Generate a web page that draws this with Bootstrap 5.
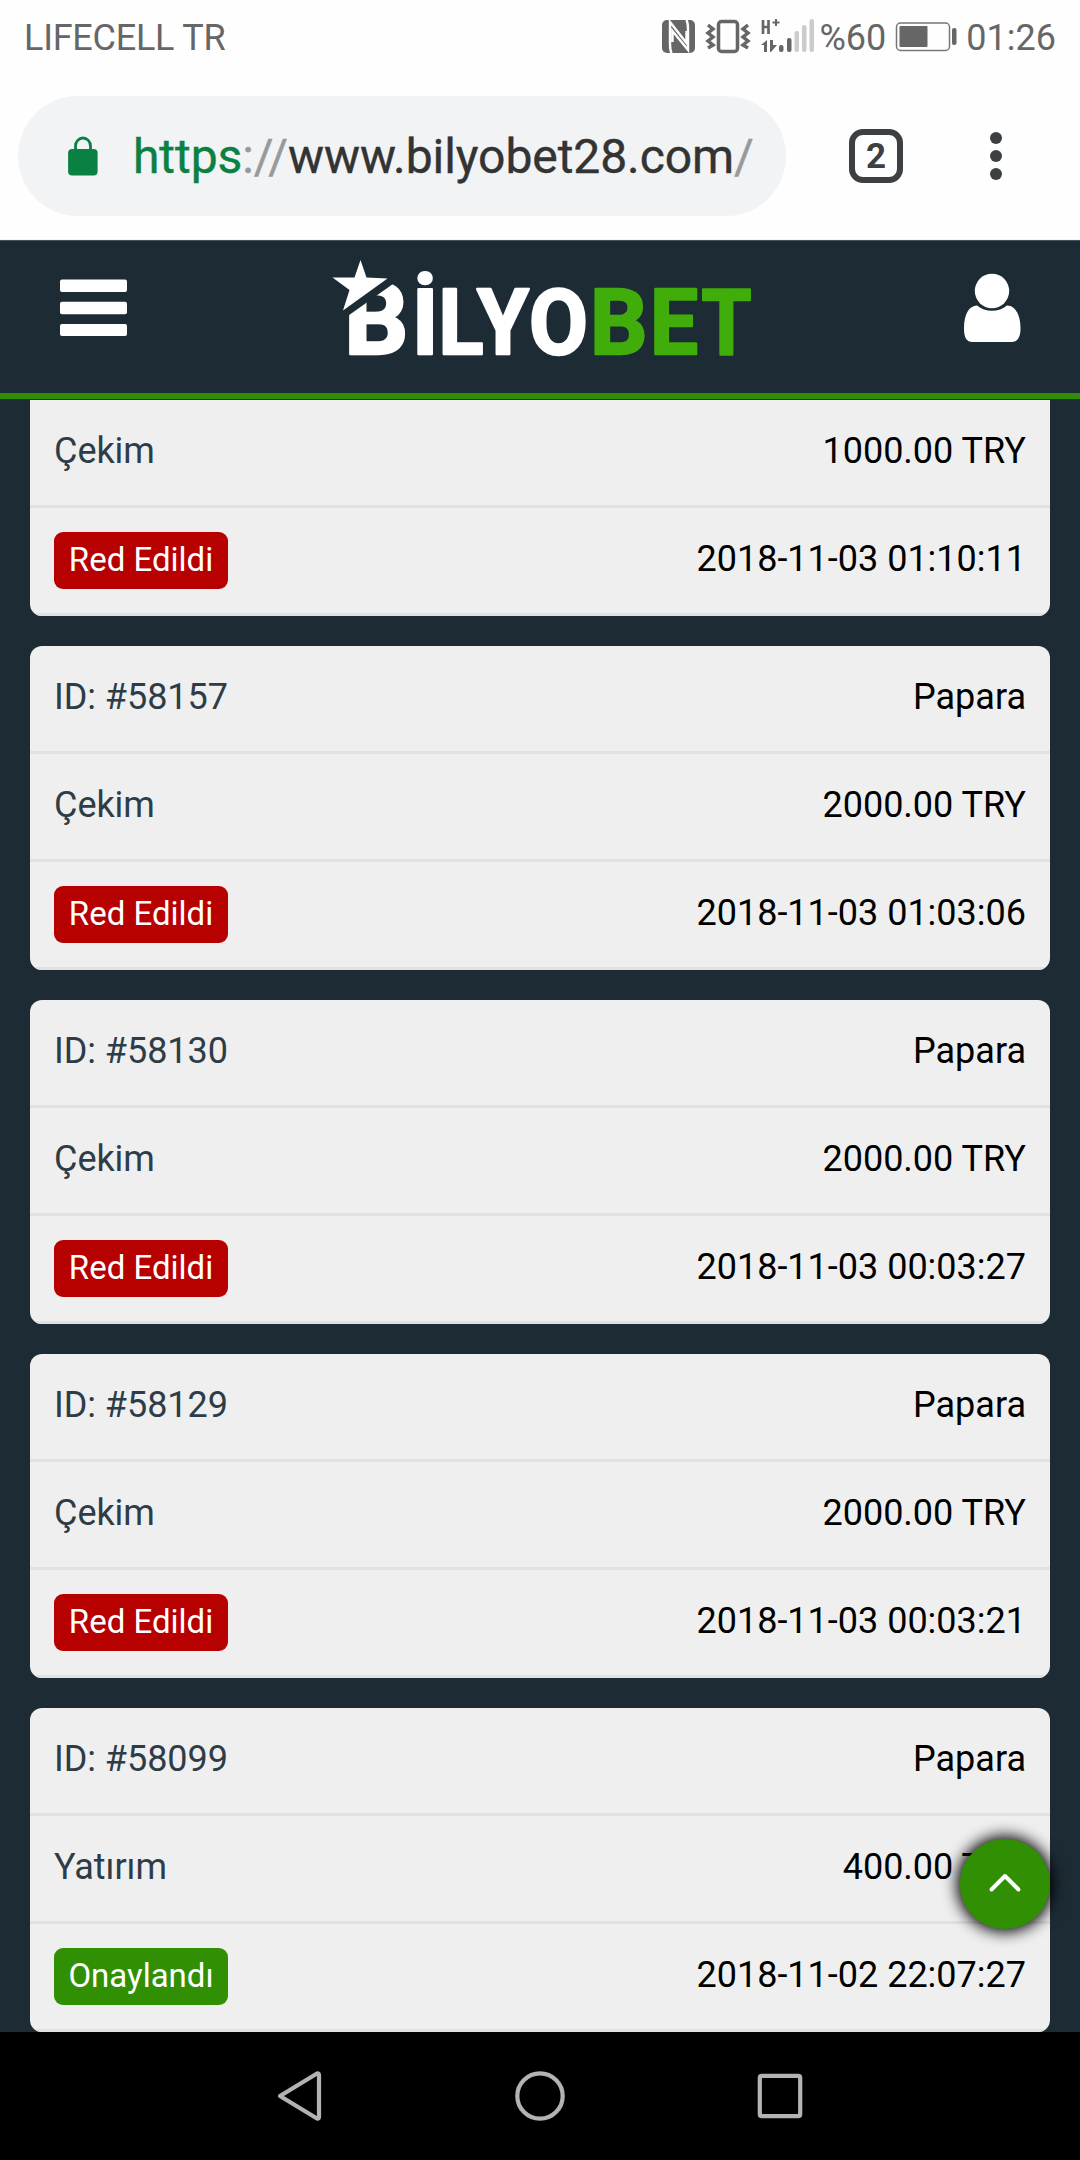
<!DOCTYPE html>
<html lang="tr">
<head>
<meta charset="utf-8">
<meta name="viewport" content="width=device-width, initial-scale=1">
<title>Bilyobet</title>
<link href="https://cdn.jsdelivr.net/npm/bootstrap@5.3.0/dist/css/bootstrap.min.css" rel="stylesheet">
<style>
body{font-family:Roboto,"Noto Sans",sans-serif;width:1080px;height:2160px;overflow:hidden;background:#1d2c34}
svg{display:block;flex:none}
.statusbar{height:72px;padding:0 24px;font-size:36px;line-height:72px;color:#666;background:#fefefe}
.statusbar span{padding-top:3px;line-height:72px}
.carrier{letter-spacing:-.25px}
.toolbar{height:168px;background:#fefefe;padding:24px 0 24px 18px;border-bottom:1px solid #f4f4f4}
.urlpill{width:768px;height:120px;border-radius:60px;background:#f1f3f5;padding-left:48px}
.urltext{font-size:48px;margin-left:35px;color:#333;white-space:nowrap;line-height:120px;padding-top:3px;letter-spacing:-.07px;-webkit-text-stroke:.4px}
.urltext .scheme{color:#0b8043}
.urltext .dim{color:#999}
.tabcount{width:54px;height:54px;border:6px solid #3c4043;border-radius:14px;margin-left:63px;font-weight:700;font-size:35px;color:#3c4043;line-height:1;padding-top:2px}
.sitehead{height:159px;border-top:1px solid #465157;border-bottom:6px solid #318f06;background:#1d2c34}
.feed{height:1633px;padding:0 30px;overflow:hidden;border-top:1px solid #15400a}
.txn{border-radius:12px;overflow:hidden;background:#efefef;margin-bottom:30px}
.txn.cut{border-radius:0 0 12px 12px}
.txn-row{height:108px;border-bottom:3px solid #e1e1e1;padding:0 24px;font-size:36px;color:#000}
.txn-row .lbl{color:#2e3c47;letter-spacing:-.05px}
.txn-row span{line-height:101px;padding-bottom:2px;white-space:nowrap}
.txn-row .state{height:57px;width:174px;line-height:56px;padding:0;border-radius:9px;font-size:33px;color:#fff;text-align:center}
.rejected{background:#b70000}
.approved{background:#318f03}
.totop{position:fixed;left:960px;top:1839px;width:90px;height:90px;background:#318f03;box-shadow:0 0 15px 3px #000}
.sysnav{height:128px;background:#000;padding-left:276px}
</style>
<script src="https://cdn.jsdelivr.net/npm/bootstrap@5.3.0/dist/js/bootstrap.bundle.min.js"></script>
</head>
<body class="m-0">
<div class="statusbar d-flex align-items-center">
  <span class="carrier me-auto">LIFECELL TR</span>
  <svg width="157" height="72" viewBox="659 0 157 72" fill="#666">
    <rect x="662" y="20" width="33" height="33" rx="5"/>
    <path d="M671.500 53Q670 50 670 44V22L686.500 43V31M686.500 20Q688 23 688 29V50L672.500 31V42" fill="none" stroke="#fefefe" stroke-width="2.400"/>
    <rect x="718.500" y="21.500" width="19" height="30" rx="3" fill="none" stroke="#666" stroke-width="3.500"/>
    <path d="M708 25l5 4-5 4 5 4-5 4 5 4-5 3M748 25l-5 4 5 4-5 4 5 4-5 4 5 3" fill="none" stroke="#666" stroke-width="3.500"/>
    <path d="M763 20v14M768.500 20v14M763 27h5.500" stroke="#666" stroke-width="2.700"/>
    <path d="M776 19v7M772.500 22.500h7" stroke="#666" stroke-width="2"/>
    <path d="M761 45l6-5v12h-3v-7zM770 40h3v5h4l-6 7h-1z"/>
    <rect x="779" y="45" width="4.500" height="7" rx="2"/><rect x="787" y="38" width="4.500" height="14" rx="2"/>
    <g fill="#ccc"><rect x="794.500" y="31" width="4.500" height="21" rx="2"/><rect x="802" y="25" width="4.500" height="27" rx="2"/><rect x="809.500" y="19" width="4.500" height="33" rx="2"/></g>
  </svg>
  <span class="ms-1">%60</span>
  <svg class="ms-2" width="64" height="72" viewBox="894 0 64 72" fill="#666">
    <rect x="896.500" y="23" width="53" height="27.500" rx="4" fill="none" stroke="#777" stroke-width="1.500"/>
    <rect x="899.500" y="26" width="28" height="21" rx="1"/><rect x="952" y="28" width="4.500" height="17" rx="2"/>
  </svg>
  <span class="ms-2">01:26</span>
</div>
<div class="toolbar d-flex align-items-center">
  <div class="urlpill d-flex align-items-center">
    <svg class="ms-0" width="32" height="40" viewBox="-2 0 32 40"><rect x="-1.400" y="13" width="29.500" height="26.500" rx="4" fill="#0b8043" transform="translate(1.500 0)"/><path d="M7.500 15V10a7.500 8 0 0 1 15 0v5" fill="none" stroke="#0b8043" stroke-width="2.800"/></svg>
    <div class="urltext"><span class="scheme">https</span><span class="dim">://</span>www.bilyobet28.com<span class="dim">/</span></div>
  </div>
  <div class="tabcount d-flex align-items-center justify-content-center">2</div>
  <svg width="12" height="50" viewBox="0 0 12 50" fill="#3c4043" style="margin-left:87px"><circle cx="6" cy="7" r="6"/><circle cx="6" cy="25" r="6"/><circle cx="6" cy="43" r="6"/></svg>
</div>
<header class="sitehead">
  <svg width="1080" height="152" viewBox="0 241 1080 152" fill="#fff">
    <rect x="60" y="279.500" width="67" height="12.500" rx="2"/><rect x="60" y="301.700" width="67" height="12.500" rx="2"/><rect x="60" y="324" width="67" height="12" rx="2"/>
    <g font-family="Roboto" font-weight="700" font-size="90" stroke="#fff" stroke-width="2.500" stroke-linejoin="round">
      <text y="353.500"><tspan x="344" font-size="101">B</tspan><tspan x="412">İ</tspan><tspan x="438.500" textLength="45" lengthAdjust="spacingAndGlyphs">L</tspan><tspan x="477" textLength="52" lengthAdjust="spacingAndGlyphs">Y</tspan><tspan x="529" textLength="59" lengthAdjust="spacingAndGlyphs">O</tspan></text>
      <text y="353.500" fill="#40ad0a" stroke="#40ad0a"><tspan x="590">B</tspan><tspan x="650" textLength="48" lengthAdjust="spacingAndGlyphs">E</tspan><tspan x="701.500" textLength="50" lengthAdjust="spacingAndGlyphs">T</tspan></text>
    </g>
    <path d="M340 321.500L400 279V270H340z" fill="#1d2c34"/>
    <path d="M360.500 260l6 17.500 21 1-44.500 32 6.500-20.500-17-12.500 22 0z"/>
    <circle cx="992" cy="291" r="17.200"/>
    <path d="M977 305.500c8 7 22 7 30 0 8 0 13.500 9 13.500 23 0 9-3 13.500-9 13.500h-39c-6 0-8.500-4.500-8.500-13.500 0-14 5-23 13-23z"/>
  </svg>
</header>
<main class="feed">
  <section class="txn cut">
    <div class="txn-row d-flex align-items-center justify-content-between"><span class="lbl">Çekim</span><span>1000.00 TRY</span></div>
    <div class="txn-row d-flex align-items-center justify-content-between"><span class="state rejected">Red Edildi</span><span>2018-11-03 01:10:11</span></div>
  </section>
  <section class="txn">
    <div class="txn-row d-flex align-items-center justify-content-between"><span class="lbl">ID: #58157</span><span>Papara</span></div>
    <div class="txn-row d-flex align-items-center justify-content-between"><span class="lbl">Çekim</span><span>2000.00 TRY</span></div>
    <div class="txn-row d-flex align-items-center justify-content-between"><span class="state rejected">Red Edildi</span><span>2018-11-03 01:03:06</span></div>
  </section>
  <section class="txn">
    <div class="txn-row d-flex align-items-center justify-content-between"><span class="lbl">ID: #58130</span><span>Papara</span></div>
    <div class="txn-row d-flex align-items-center justify-content-between"><span class="lbl">Çekim</span><span>2000.00 TRY</span></div>
    <div class="txn-row d-flex align-items-center justify-content-between"><span class="state rejected">Red Edildi</span><span>2018-11-03 00:03:27</span></div>
  </section>
  <section class="txn">
    <div class="txn-row d-flex align-items-center justify-content-between"><span class="lbl">ID: #58129</span><span>Papara</span></div>
    <div class="txn-row d-flex align-items-center justify-content-between"><span class="lbl">Çekim</span><span>2000.00 TRY</span></div>
    <div class="txn-row d-flex align-items-center justify-content-between"><span class="state rejected">Red Edildi</span><span>2018-11-03 00:03:21</span></div>
  </section>
  <section class="txn">
    <div class="txn-row d-flex align-items-center justify-content-between"><span class="lbl">ID: #58099</span><span>Papara</span></div>
    <div class="txn-row d-flex align-items-center justify-content-between"><span class="lbl">Yatırım</span><span>400.00 TRY</span></div>
    <div class="txn-row d-flex align-items-center justify-content-between"><span class="state approved">Onaylandı</span><span>2018-11-02 22:07:27</span></div>
  </section>
</main>
<a class="totop rounded-circle d-flex align-items-center justify-content-center" aria-label="Yukarı">
  <svg width="34" height="24" viewBox="0 0 34 24" fill="none" stroke="#fff" stroke-width="4" stroke-linecap="round" stroke-linejoin="round"><path d="M3.500 17.500L17 4 30.500 17.500"/></svg>
</a>
<nav class="sysnav d-flex align-items-center">
  <svg width="534" height="60" viewBox="276 2066 534 60" fill="none" stroke="#b3b3b3" stroke-width="4.200" stroke-linejoin="round">
    <path d="M280 2096L317 2073.500 Q319 2073 319 2075V2117Q319 2119 317 2118.500Z"/>
    <circle cx="540" cy="2096" r="22.700"/>
    <rect x="759.800" y="2075.800" width="40.400" height="40.400" rx="2"/>
  </svg>
</nav>
</body>
</html>
